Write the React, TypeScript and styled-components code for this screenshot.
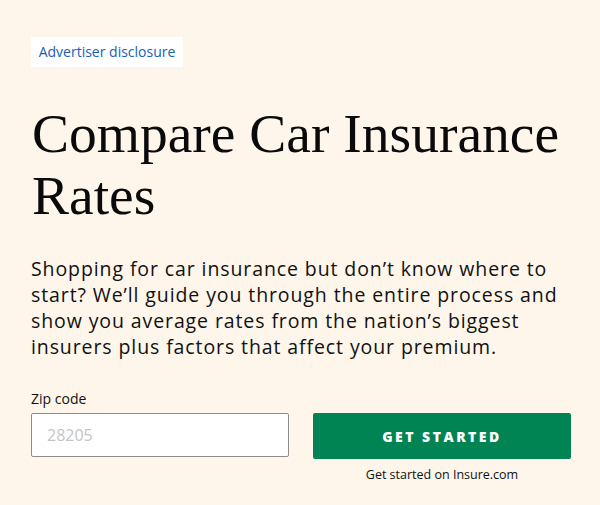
import React from "react";
import styled, { createGlobalStyle } from "styled-components";

const Global = createGlobalStyle`
  html, body { margin: 0; padding: 0; background: #fef6ea; }
  * { box-sizing: border-box; }
`;

const Page = styled.div`
  width: 600px;
  height: 505px;
  background: #fef6ea;
  padding: 37px 29px 0 31px;
  font-family: "Open Sans", sans-serif;
  color: #111;
`;

const Disclosure = styled.div`
  display: inline-block;
  background: #fff;
  color: #1560b8;
  font-family: "Open Sans", sans-serif;
  font-size: 14px;
  line-height: 30px;
  width: 152px;
  text-align: center;
`;

const Title = styled.h1`
  margin: 36px 0 0 1px;
  font-family: "Liberation Serif", serif;
  font-weight: 400;
  font-size: 55.5px;
  line-height: 62px;
  color: #0a0a0a;
`;

const Lead = styled.p`
  margin: 29px 0 0 0;
  font-family: "Open Sans", sans-serif;
  font-size: 19.5px;
  letter-spacing: 0.9px;
  line-height: 26px;
  color: #111;
`;

const FormRow = styled.div`
  display: grid;
  grid-template-columns: 258px 258px;
  column-gap: 24px;
  margin-top: 30px;
`;

const Field = styled.div`
  display: flex;
  flex-direction: column;
`;

const Label = styled.label`
  font-family: "Open Sans", sans-serif;
  font-size: 14px;
  line-height: 18px;
  color: #111;
  margin-bottom: 5px;
`;

const Input = styled.input`
  height: 44px;
  width: 258px;
  border: 1px solid #8c8c8c;
  border-radius: 2px;
  background: #fff;
  padding: 0 15px;
  font-family: "Open Sans", sans-serif;
  font-size: 16px;
  &::placeholder { color: #c4c4c4; }
  outline: none;
`;

const Action = styled.div`
  display: flex;
  flex-direction: column;
  align-items: center;
  padding-top: 23px;
`;

const Button = styled.button`
  width: 258px;
  height: 46px;
  border: none;
  border-radius: 2px;
  background: #008454;
  color: #fff;
  font-family: "Open Sans", sans-serif;
  font-weight: 800;
  font-size: 14px;
  letter-spacing: 2.5px;
  cursor: pointer;
`;

const Note = styled.div`
  margin-top: 7px;
  font-family: "Open Sans", sans-serif;
  font-size: 12.5px;
  line-height: 17px;
  color: #111;
`;

export default function App() {
  return (
    <>
      <Global />
      <Page>
        <Disclosure>Advertiser disclosure</Disclosure>
        <Title>Compare Car Insurance Rates</Title>
        <Lead>
          Shopping for car insurance but don’t know where to start? We’ll guide you
          through the entire process and show you average rates from the nation’s
          biggest insurers plus factors that affect your premium.
        </Lead>
        <FormRow>
          <Field>
            <Label htmlFor="zip">Zip code</Label>
            <Input id="zip" placeholder="28205" />
          </Field>
          <Action>
            <Button>GET STARTED</Button>
            <Note>Get started on Insure.com</Note>
          </Action>
        </FormRow>
      </Page>
    </>
  );
}
